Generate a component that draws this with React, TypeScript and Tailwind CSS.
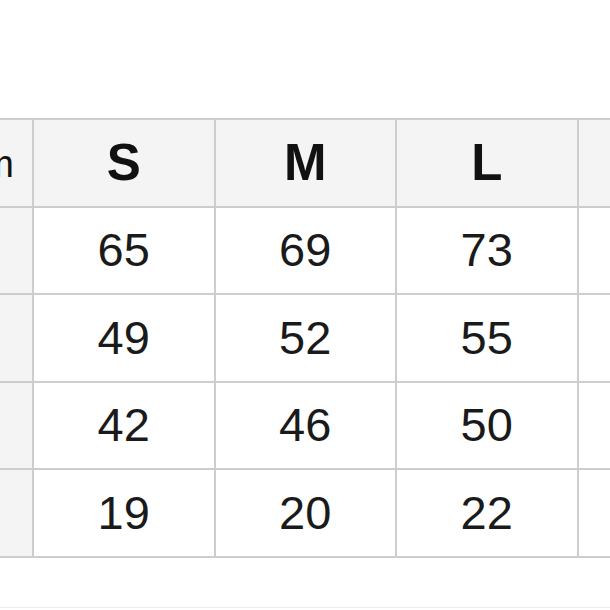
const sizes = ['S', 'M', 'L', 'XL'];

const rows = [
  ['총장', '65', '69', '73', '77'],
  ['어깨', '49', '52', '55', '58'],
  ['가슴', '42', '46', '50', '54'],
  ['소매', '19', '20', '22', '23'],
];

export default function App() {
  return (
    <div className="w-[610px] h-[610px] overflow-hidden bg-white pt-[118px] font-['Liberation_Sans',Arial,sans-serif] text-[#111]">
      {/* size chart, cropped on both sides like the photo */}
      <div className="ml-[-149.5px] grid w-max grid-cols-[179.5px_179.5px_179.5px_179.5px_179.5px] gap-[2px] border-2 border-[#cdcdcd] bg-[#cdcdcd]">
        <div className="flex h-[85.6px] items-center justify-end bg-[#f4f4f4] pr-[18px] pt-[4px] text-[38px]">
          단위 cm
        </div>
        {sizes.map((s) => (
          <div
            key={s}
            className="flex h-[85.6px] items-center justify-center bg-[#f4f4f4] text-[51px] font-bold"
          >
            {s}
          </div>
        ))}
        {rows.map((row) =>
          row.map((cell, i) =>
            i === 0 ? (
              <div
                key={cell}
                className="flex h-[85.6px] items-center justify-center bg-[#f4f4f4] text-[36px]"
              >
                {cell}
              </div>
            ) : (
              <div
                key={row[0] + i}
                className="flex h-[85.6px] items-center justify-center bg-white text-[47px] text-[#1a1a1a]"
              >
                {cell}
              </div>
            )
          )
        )}
      </div>
      <div className="mt-[49px] h-px bg-[#ececec]" />
    </div>
  );
}
